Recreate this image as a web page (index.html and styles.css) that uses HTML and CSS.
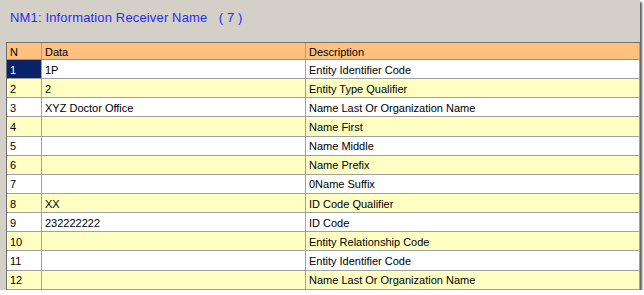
FILE: index.html
```html
<!DOCTYPE html>
<html>
<head>
<meta charset="utf-8">
<link rel="stylesheet" href="styles.css">
</head>
<body>
<div class="window">
  <div class="title">NM1: Information Receiver Name &nbsp; ( 7 )</div>
  <div class="grid">
    <div class="row head">
      <div class="c n">N</div><div class="c d">Data</div><div class="c s">Description</div>
    </div>
    <div class="row w">
      <div class="c n sel">1</div><div class="c d">1P</div><div class="c s">Entity Identifier Code</div>
    </div>
    <div class="row y">
      <div class="c n">2</div><div class="c d">2</div><div class="c s">Entity Type Qualifier</div>
    </div>
    <div class="row w">
      <div class="c n">3</div><div class="c d">XYZ Doctor Office</div><div class="c s">Name Last Or Organization Name</div>
    </div>
    <div class="row y">
      <div class="c n">4</div><div class="c d"></div><div class="c s">Name First</div>
    </div>
    <div class="row w">
      <div class="c n">5</div><div class="c d"></div><div class="c s">Name Middle</div>
    </div>
    <div class="row y">
      <div class="c n">6</div><div class="c d"></div><div class="c s">Name Prefix</div>
    </div>
    <div class="row w">
      <div class="c n">7</div><div class="c d"></div><div class="c s">0Name Suffix</div>
    </div>
    <div class="row y">
      <div class="c n">8</div><div class="c d">XX</div><div class="c s">ID Code Qualifier</div>
    </div>
    <div class="row w">
      <div class="c n">9</div><div class="c d">232222222</div><div class="c s">ID Code</div>
    </div>
    <div class="row y">
      <div class="c n">10</div><div class="c d"></div><div class="c s">Entity Relationship Code</div>
    </div>
    <div class="row w">
      <div class="c n">11</div><div class="c d"></div><div class="c s">Entity Identifier Code</div>
    </div>
    <div class="row y">
      <div class="c n">12</div><div class="c d"></div><div class="c s">Name Last Or Organization Name</div>
    </div>
  </div>
</div>
</body>
</html>
```
FILE: styles.css
```css
html, body {
  margin: 0;
  padding: 0;
  background: #ffffff;
}
.window {
  width: 640px;
  height: 290px;
  background: #d4d0c8;
  box-shadow: 2px 2px 2px rgba(0,0,0,0.65);
  box-sizing: border-box;
  padding-left: 6px;
  overflow: hidden;
}
.title {
  height: 42px;
  box-sizing: border-box;
  padding: 10px 0 0 4px;
  font-family: "Liberation Sans", Arial, sans-serif;
  font-size: 13px;
  letter-spacing: 0.15px;
  color: #2a2af5;
}
.grid {
  width: 633px;
  border-top: 1px solid #707070;
  border-left: 1px solid #707070;
  font-family: "Liberation Sans", Arial, sans-serif;
  font-size: 11px;
  color: #000;
}
.row {
  display: flex;
  height: 19.15px;
  border-bottom: 1px solid #a0a0a0;
  box-sizing: border-box;
}
.row.head {
  height: 17px;
  background: #ffc080;
  border-bottom: 1px solid #909090;
}
.row.w { background: #ffffff; }
.row.y { background: #ffffc4; }
.c {
  box-sizing: border-box;
  padding-left: 3px;
  padding-top: 1px;
  display: flex;
  align-items: center;
  border-right: 1px solid #a0a0a0;
  white-space: nowrap;
}
.n { width: 35px; }
.d { width: 264px; }
.s { flex: 1; }
.sel {
  background: #0a246a;
  color: #ffffff;
}
```
